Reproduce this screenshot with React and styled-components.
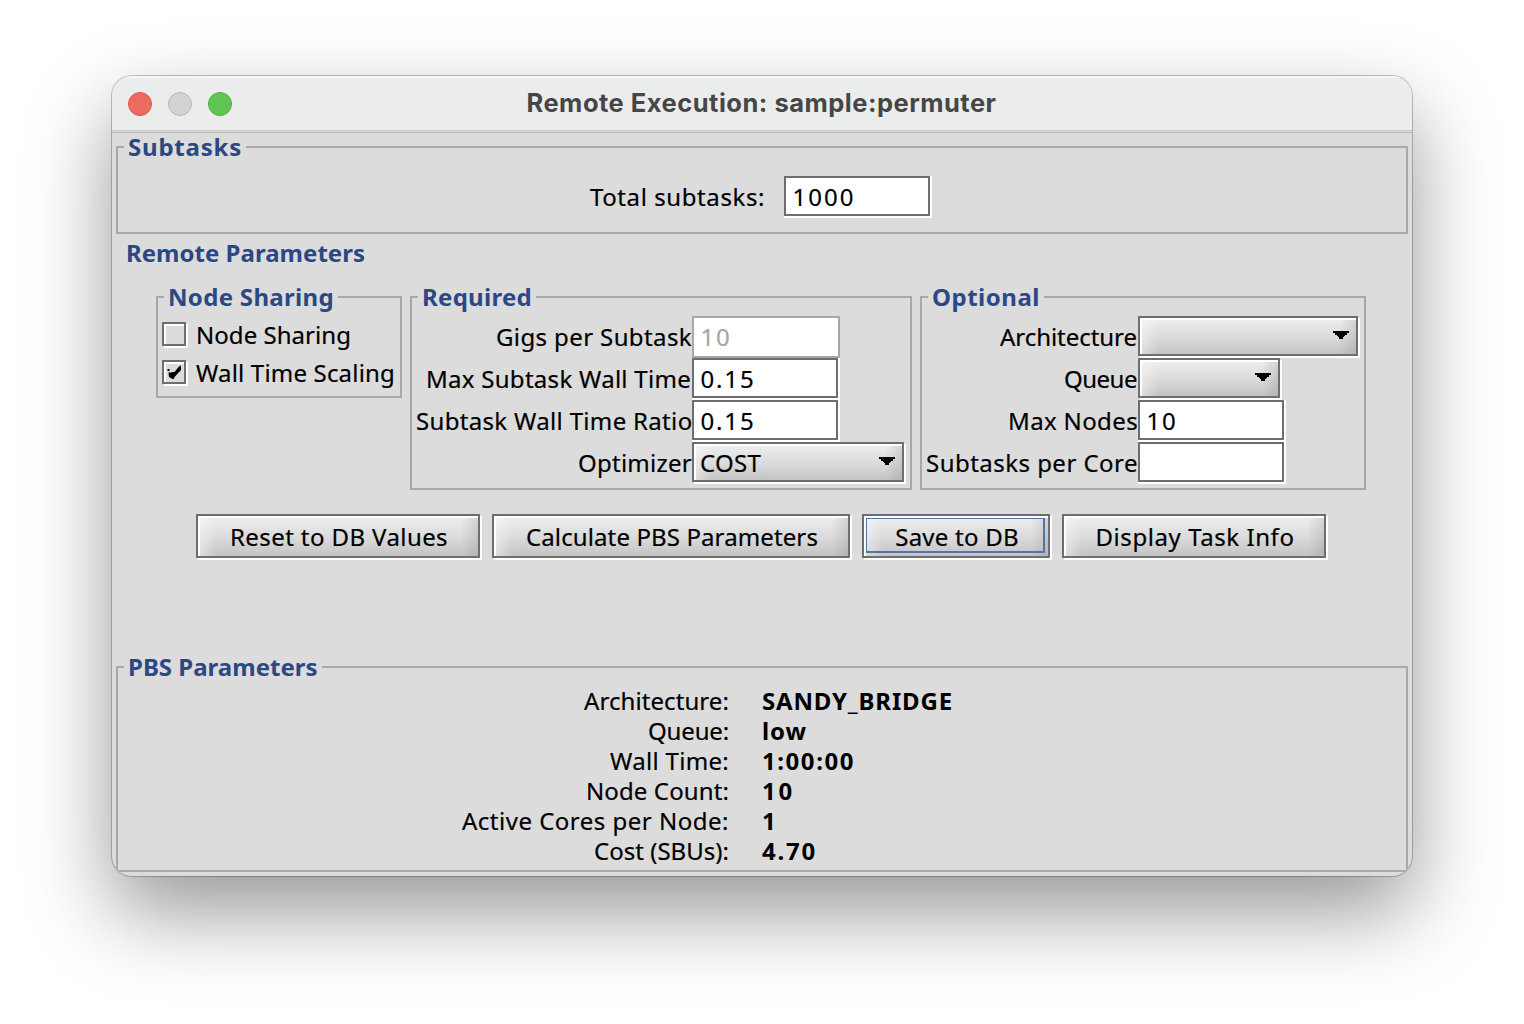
import React, { useLayoutEffect, useRef, useState } from "react";
import styled, { createGlobalStyle, css } from "styled-components";

const Global = createGlobalStyle`
  *, *::before, *::after { box-sizing: border-box; }
  html, body { margin: 0; background: #fff; overflow: hidden; }
  body { font-family: "Noto Sans", "Open Sans", sans-serif; font-size: 24px; line-height: 30px; color: #000; }
`;

const Desktop = styled.main`
  width: 1524px;
  height: 1024px;
  padding: 76px 112px;
  overflow: hidden;
`;

const Window = styled.section`
  width: 1300px;
  height: 800px;
  border-radius: 20px;
  background: #dcdcdc;
  overflow: hidden;
  box-shadow: 0 0 0 1px rgba(0, 0, 0, 0.2), 0 0 3px rgba(0, 0, 0, 0.08), 0 36px 84px rgba(0, 0, 0, 0.41);
`;

const TitleBar = styled.header`
  display: grid;
  grid-template-columns: 1fr auto 1fr;
  align-items: center;
  height: 55px;
  padding: 0 17px 0 16px;
  background: #ebedec;
  box-shadow: inset 0 2px 0 #f5f6f6;
  border-bottom: 1px solid #c3c6c5;
`;

const TitleRule = styled.div`
  height: 2px;
  margin-bottom: -1px;
  background: #dcdfde;
  border-bottom: 1px solid #b3b6b5;
`;

const Lights = styled.div`
  display: flex;
  gap: 16px;
  padding-top: 1px;
`;

const Light = styled.span`
  width: 24px;
  height: 24px;
  border-radius: 50%;
  background: ${(p) => p.$fill};
  border: 1px solid ${(p) => p.$edge};
`;

const Title = styled.h1`
  margin: 0;
  font: 700 25.5px/30px Inter, sans-serif;
  color: #464646;
`;

const Content = styled.div`
  display: flex;
  flex-direction: column;
  padding: 0 4px;
`;

const Group = styled.fieldset`
  min-width: 0;
  margin: 0;
  border: 2px solid #a8a8a8;
  padding: ${(p) => p.$pad || "4px"};
  ${(p) => p.$height && css`height: ${p.$height}px;`}
`;

const Legend = styled.legend`
  height: 30px;
  margin-left: ${(p) => p.$shift || 6}px;
  padding: 0 4px;
  font-weight: 700;
  color: #2b4884;
`;

const SectionTitle = styled.h2`
  margin: 4px 0 0;
  padding-left: 10px;
  height: 44px;
  font-size: 24px;
  line-height: 30px;
  font-weight: 700;
  color: #2b4884;
`;

const Centered = styled.div`
  display: flex;
  align-items: flex-start;
  justify-content: center;
  gap: 19px;
  height: 70px;
  padding: 14px 4px 0 0;
`;

const Groups = styled.div`
  display: flex;
  align-items: flex-start;
  gap: 8px;
  padding-left: 40px;
`;

const CheckRow = styled.label`
  display: flex;
  align-items: center;
  gap: 10px;
  height: 38px;
  width: 234px;
  -webkit-text-stroke: 0.2px;
`;

const CheckBox = styled.span`
  width: 24px;
  height: 24px;
  margin-bottom: 2px;
  border: 2px solid #6e6e6e;
  box-shadow: 2px 2px 0 #fff, inset 2px 2px 0 #fff;
  background: #dcdcdc;

  svg { display: block; margin: 2px; }
`;

const FormGrid = styled.div`
  display: grid;
  grid-template-columns: ${(p) => p.$cols};
  grid-auto-rows: 42px;
  align-items: start;
`;

const FieldLabel = styled.label`
  padding: 6px ${(p) => p.$inset || 0}px 0 0;
  text-align: right;
  -webkit-text-stroke: 0.2px;
`;

const Field = styled.div`
  width: 146px;
  height: 40px;
  padding: 4px 6.5px;
  border: 2px solid #6e6e6e;
  background: #fff;
  box-shadow: 2px 0 0 #fff, 0 2px 0 #fff, 2px 2px 0 #fff;
  -webkit-text-stroke: 0.2px;
  ${(p) =>
    p.$disabled &&
    css`
      width: 148px;
      height: 42px;
      border-color: #a8a8a8;
      color: #a6a6a6;
      box-shadow: none;
    `}
`;

const metal = css`
  border: 2px solid #6e6e6e;
  box-shadow: 2px 2px 0 #fff, inset 2px 2px 0 #fff;
  background:
    linear-gradient(to right, rgba(255, 255, 255, 0.4) 2px, rgba(255, 255, 255, 0) 19px),
    linear-gradient(to left, rgba(120, 120, 120, 0.22), rgba(120, 120, 120, 0) 17px),
    linear-gradient(to bottom, #efefef, #dadada 55%, #c4c4c4);
  -webkit-text-stroke: 0.2px;
`;

const Combo = styled.div`
  display: flex;
  justify-content: space-between;
  width: ${(p) => p.$width}px;
  height: 40px;
  padding: 4px 7px 0 6px;
  ${metal}

  svg { flex: none; margin: 9px 0 0 auto; }
`;

const Buttons = styled.div`
  display: flex;
  gap: 12px;
  margin: 24px 0 94px;
  padding-left: 80px;
`;

const Button = styled.button`
  display: grid;
  place-items: center;
  width: ${(p) => p.$width}px;
  height: 44px;
  padding: 2px 0 0 2px;
  font: inherit;
  color: inherit;
  border-radius: 0;
  ${metal}
`;

const FocusRing = styled.span`
  display: grid;
  justify-items: center;
  align-items: start;
  width: 179px;
  height: 35px;
  padding: 3px 0 0 4px;
  border: solid #5472ab;
  border-width: 1px 2px 2px 1px;
  justify-self: start;
  align-self: start;
`;

const Results = styled.dl`
  display: grid;
  grid-template-columns: 611px 1fr;
  grid-auto-rows: 30px;
  column-gap: 33px;
  margin: 0;
`;

const ResultName = styled.dt`
  text-align: right;
  -webkit-text-stroke: 0.2px;
`;

const ResultValue = styled.dd`
  margin: 0;
  font-weight: 700;
`;

const Run = styled.span`
  display: inline-block;
  white-space: pre;
`;

// Tracks a line of text so that it fills the given width.
function Text({ w, children }) {
  const ref = useRef(null);
  const [spacing, setSpacing] = useState(null);
  useLayoutEffect(() => {
    const natural = ref.current.getBoundingClientRect().width;
    setSpacing((w - natural) / children.length);
  }, []);
  const style = spacing === null ? undefined : { letterSpacing: `${spacing}px` };
  return <Run ref={ref} style={style}>{children}</Run>;
}

const Arrow = () => (
  <svg width="16" height="8" viewBox="0 0 16 8" shapeRendering="crispEdges">
    <path d="M0 0H16V2H14V4H12V5H11V6H10V8H6V6H5V5H4V4H2V2H0Z" />
  </svg>
);

const Tick = () => (
  <svg width="16" height="16" viewBox="0 0 16 16">
    <path d="M1.5 5H3.5V7H1.5Z M2.5 8.5H5L7 8L8.5 8L13 2.5L15 1.5V6L9 12.5L7.5 15H6L5 14L3 13Z" />
  </svg>
);

const required = [
  { label: "Gigs per Subtask", w: 196, value: "10", vw: 31, disabled: true },
  { label: "Max Subtask Wall Time", w: 265, value: "0.15", vw: 55, inset: 1 },
  { label: "Subtask Wall Time Ratio", w: 276.5, value: "0.15", vw: 55 },
  { label: "Optimizer", w: 114, value: "COST", vw: 61, combo: 212 },
];

const optional = [
  { label: "Architecture", w: 137, combo: 220, inset: 1 },
  { label: "Queue", w: 73, combo: 142, inset: 1 },
  { label: "Max Nodes", w: 130, value: "10", vw: 31 },
  { label: "Subtasks per Core", w: 212, inset: 1 },
];

const results = [
  ["Architecture:", 145, "SANDY_BRIDGE", 191],
  ["Queue:", 81, "low", 45],
  ["Wall Time:", 119, "1:00:00", 93],
  ["Node Count:", 143, "10", 33],
  ["Active Cores per Node:", 267, "1", 16],
  ["Cost (SBUs):", 135, "4.70", 55],
];

const FormRow = ({ label, w, value, vw, disabled, combo, inset }) => (
  <>
    <FieldLabel $inset={inset}><Text w={w}>{label}</Text></FieldLabel>
    {combo ? (
      <Combo $width={combo}>
        {value && <Text w={vw}>{value}</Text>}
        <Arrow />
      </Combo>
    ) : (
      <Field $disabled={disabled}>{value && <Text w={vw}>{value}</Text>}</Field>
    )}
  </>
);

export default function App() {
  return (
    <>
      <Global />
      <Desktop>
        <Window>
          <TitleBar>
            <Lights>
              <Light $fill="#ed6a5e" $edge="#d8594f" />
              <Light $fill="#d1d3d2" $edge="#b5b7b6" />
              <Light $fill="#61c554" $edge="#50a943" />
            </Lights>
            <Title><Text w={470}>Remote Execution: sample:permuter</Text></Title>
          </TitleBar>
          <TitleRule />
          <Content>
            <Group $pad="0" $height={102}>
              <Legend><Text w={114}>Subtasks</Text></Legend>
              <Centered>
                <FieldLabel><Text w={175}>Total subtasks:</Text></FieldLabel>
                <Field><Text w={63}>1000</Text></Field>
              </Centered>
            </Group>
            <SectionTitle><Text w={239}>Remote Parameters</Text></SectionTitle>
            <Groups>
              <Group>
                <Legend $shift={2}><Text w={166}>Node Sharing</Text></Legend>
                <CheckRow><CheckBox /><Text w={155}>Node Sharing</Text></CheckRow>
                <CheckRow><CheckBox><Tick /></CheckBox><Text w={199}>Wall Time Scaling</Text></CheckRow>
              </Group>
              <Group>
                <Legend $shift={2}><Text w={110}>Required</Text></Legend>
                <FormGrid $cols="276px 214px">
                  {required.map((r) => <FormRow key={r.label} {...r} />)}
                </FormGrid>
              </Group>
              <Group>
                <Legend $shift={2}><Text w={108}>Optional</Text></Legend>
                <FormGrid $cols="212px 222px">
                  {optional.map((r) => <FormRow key={r.label} {...r} />)}
                </FormGrid>
              </Group>
            </Groups>
            <Buttons>
              <Button $width={284}><Text w={218}>Reset to DB Values</Text></Button>
              <Button $width={358}><Text w={292}>Calculate PBS Parameters</Text></Button>
              <Button $width={188}><FocusRing><Text w={123.5}>Save to DB</Text></FocusRing></Button>
              <Button $width={264}><Text w={199}>Display Task Info</Text></Button>
            </Buttons>
            <Group $pad="4px 0 0" $height={220}>
              <Legend><Text w={189.5}>PBS Parameters</Text></Legend>
              <Results>
                {results.map(([name, w, value, vw]) => (
                  <React.Fragment key={name}>
                    <ResultName><Text w={w}>{name}</Text></ResultName>
                    <ResultValue><Text w={vw}>{value}</Text></ResultValue>
                  </React.Fragment>
                ))}
              </Results>
            </Group>
          </Content>
        </Window>
      </Desktop>
    </>
  );
}
